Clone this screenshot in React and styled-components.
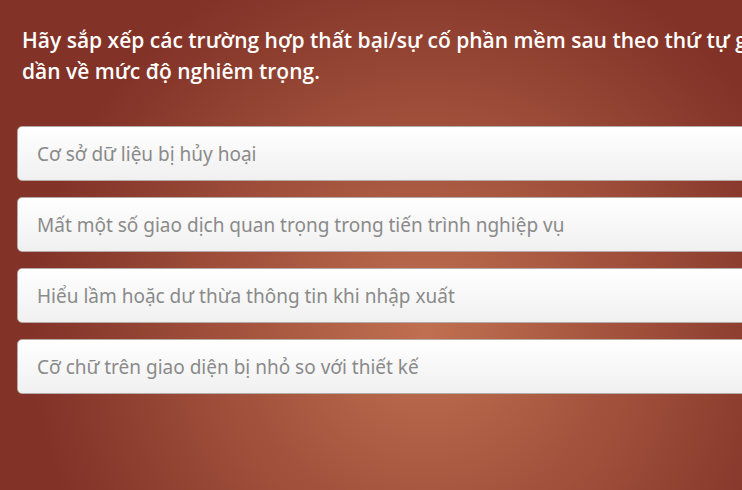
import React from "react";
import styled, { createGlobalStyle } from "styled-components";

const GlobalStyle = createGlobalStyle`
  * { box-sizing: border-box; }
  body { margin: 0; overflow: hidden; font-family: "Noto Sans", "Open Sans", sans-serif; }
`;

const Page = styled.main`
  min-height: 100vh;
  padding: 25px 0 24px 17px;
  background: radial-gradient(circle 398px at 426px 332px, #c07050 0%, #823227 100%);
`;

const Question = styled.h1`
  width: 800px;
  margin: 0 0 39px;
  padding-left: 5px;
  color: #fff;
  font-family: "Open Sans", "Noto Sans", sans-serif;
  font-size: 21px;
  font-weight: 600;
  line-height: 31px;
`;

const AnswerList = styled.ol`
  display: grid;
  gap: 16px;
  margin: 0 -8px 0 0;
  padding: 0;
  list-style: none;
`;

const AnswerButton = styled.button`
  display: block;
  width: 100%;
  height: 55px;
  padding: 1px 19px 0;
  border: 1px solid #b5aaa7;
  border-radius: 5px;
  background: linear-gradient(#ffffff, #f0f0f0);
  color: #8a8a8a;
  font-family: inherit;
  font-size: 19px;
  line-height: 28px;
  text-align: left;
  white-space: nowrap;
  cursor: grab;
`;

const answers = [
  "Cơ sở dữ liệu bị hủy hoại",
  "Mất một số giao dịch quan trọng trong tiến trình nghiệp vụ",
  "Hiểu lầm hoặc dư thừa thông tin khi nhập xuất",
  "Cỡ chữ trên giao diện bị nhỏ so với thiết kế",
];

export default function App() {
  return (
    <Page>
      <GlobalStyle />
      <Question>
        Hãy sắp xếp các trường hợp thất bại/sự cố phần mềm sau theo thứ tự giảm
        dần về mức độ nghiêm trọng.
      </Question>
      <AnswerList>
        {answers.map((answer) => (
          <li key={answer}>
            <AnswerButton type="button">{answer}</AnswerButton>
          </li>
        ))}
      </AnswerList>
    </Page>
  );
}
